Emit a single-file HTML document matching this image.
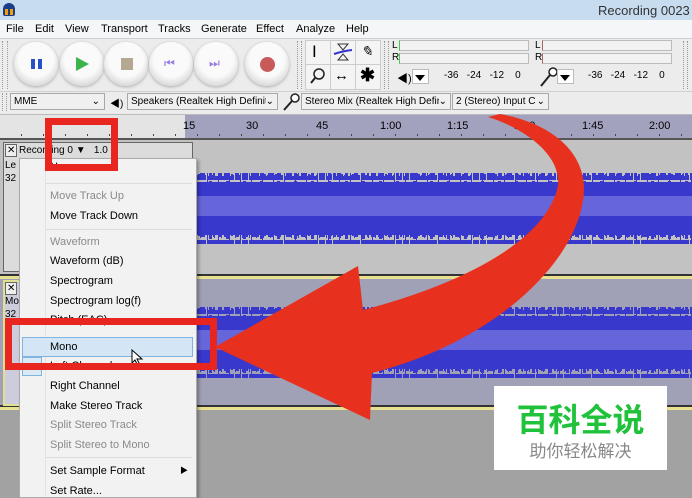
<!DOCTYPE html>
<html><head><meta charset="utf-8"><style>
*{margin:0;padding:0;box-sizing:border-box}
body{width:692px;height:495px;overflow:hidden;position:relative;background:#a2a2a2;font-family:"Liberation Sans","Noto Sans CJK SC",sans-serif;font-size:11px;color:#000}
.a{position:absolute}
.t{position:absolute;white-space:nowrap}
.btn{position:absolute;width:44px;height:44px;border-radius:50%;background:radial-gradient(circle at 50% 40%,#fafafa 50%,#d8d8d8 78%,#bdbdbd);box-shadow:0 1px 3px #aaa}
.dd{position:absolute;height:17px;border:1px solid #a8a8a8;background:#f0f0f0;font-size:10px;padding:2px 3px;white-space:nowrap;overflow:hidden}
.mi{position:absolute;left:50px;font-size:11px;white-space:nowrap}
.g{color:#8a8a8a}
.sep{position:absolute;left:46px;width:146px;height:1px;background:#dcdcdc}
.m{position:absolute;top:23px;white-space:nowrap}
</style></head><body>
<div class="a" style="left:0;top:0;width:692px;height:20px;background:#c8dcf0"></div>
<div class="a" style="left:3px;top:3px;width:12px;height:13px;border-radius:6px 6px 2px 2px;background:#1a3c8a"></div>
<div class="a" style="left:5px;top:9px;width:3px;height:6px;background:#f0a000"></div>
<div class="a" style="left:10px;top:9px;width:3px;height:6px;background:#f0a000"></div>
<div class="t" style="left:598px;top:3px;font-size:13px;color:#333">Recording 0023</div>
<div class="a" style="left:0;top:20px;width:692px;height:18px;background:#f5f6f7"></div>
<div class="m" style="left:6px">File</div><div class="m" style="left:35px">Edit</div><div class="m" style="left:65px">View</div><div class="m" style="left:101px">Transport</div><div class="m" style="left:158px">Tracks</div><div class="m" style="left:201px">Generate</div><div class="m" style="left:256px">Effect</div><div class="m" style="left:296px">Analyze</div><div class="m" style="left:346px">Help</div>
<div class="a" style="left:0;top:38px;width:692px;height:76px;background:#ececec;border-top:1px solid #d0d0d0"></div>
<div class="a" style="left:2px;top:41px;width:6px;height:48px;border-left:1px dotted #999;border-right:1px dotted #999"></div>
<div class="btn" style="left:14px;top:42px"></div><div class="a" style="left:31px;top:59px;width:4px;height:10px;background:#2b4fc8"></div><div class="a" style="left:38px;top:59px;width:4px;height:10px;background:#2b4fc8"></div>
<div class="btn" style="left:60px;top:42px"></div><div class="a" style="left:76px;top:57px;border-left:13px solid #3cb44a;border-top:7px solid transparent;border-bottom:7px solid transparent"></div>
<div class="btn" style="left:104px;top:42px"></div><div class="a" style="left:121px;top:58px;width:12px;height:12px;background:#b4a890"></div>
<div class="btn" style="left:149px;top:42px"></div><div class="t" style="left:164px;top:56px;color:#9a7ce0;font-size:12px">⏮</div>
<div class="btn" style="left:194px;top:42px"></div><div class="t" style="left:209px;top:56px;color:#9a7ce0;font-size:12px">⏭</div>
<div class="btn" style="left:245px;top:42px"></div><div class="a" style="left:260px;top:57px;width:15px;height:15px;border-radius:50%;background:#c85a5a"></div>
<div class="a" style="left:297px;top:41px;width:5px;height:48px;border-left:1px dotted #999;border-right:1px dotted #999"></div>
<div class="a" style="left:305px;top:40px;width:76px;height:50px;border:1px solid #ccc;background:#f4f4f4"></div>
<div class="a" style="left:305px;top:64px;width:76px;height:1px;background:#ccc"></div>
<div class="a" style="left:330px;top:40px;width:1px;height:50px;background:#ccc"></div>
<div class="a" style="left:355px;top:40px;width:1px;height:50px;background:#ccc"></div>
<div class="t" style="left:312px;top:42px;font-size:17px">I</div>
<svg class="a" style="left:333px;top:42px" width="20" height="20"><path d="M5 2h10L10 8z M5 18h10L10 12z" fill="none" stroke="#333"/><path d="M1 12 Q10 9 19 8" stroke="#3333cc" stroke-width="2" fill="none"/></svg>
<div class="t" style="left:361px;top:43px;font-size:14px;font-style:italic">✎</div>
<svg class="a" style="left:309px;top:67px" width="18" height="18"><circle cx="10" cy="7" r="5" fill="none" stroke="#222" stroke-width="1.5"/><path d="M6 11 L2 16" stroke="#222" stroke-width="2"/></svg>
<div class="t" style="left:334px;top:67px;font-size:15px">↔</div>
<div class="t" style="left:360px;top:65px;font-size:18px;font-weight:bold">✱</div>
<div class="a" style="left:384px;top:41px;width:5px;height:48px;border-left:1px dotted #999;border-right:1px dotted #999"></div>
<div class="t" style="left:392px;top:40px;font-size:10px">L</div><div class="t" style="left:392px;top:52px;font-size:10px">R</div>
<div class="a" style="left:399px;top:40px;width:130px;height:11px;border:1px solid #bbb;border-left:1px solid #4c4;background:#f2f2f2"></div>
<div class="a" style="left:399px;top:53px;width:130px;height:11px;border:1px solid #bbb;border-left:1px solid #4c4;background:#f2f2f2"></div>
<div class="t" style="left:535px;top:40px;font-size:10px">L</div><div class="t" style="left:535px;top:52px;font-size:10px">R</div>
<div class="a" style="left:542px;top:40px;width:130px;height:11px;border:1px solid #bbb;border-left:1px solid #a66;background:#f2f2f2"></div>
<div class="a" style="left:542px;top:53px;width:130px;height:11px;border:1px solid #bbb;border-left:1px solid #a66;background:#f2f2f2"></div>
<div class="t" style="left:397px;top:70px;font-size:11px">◀)</div>
<div class="a" style="left:412px;top:69px;width:17px;height:15px;background:#fff;border:1px solid #bbb"></div><div class="a" style="left:415px;top:75px;border-top:6px solid #000;border-left:5px solid transparent;border-right:5px solid transparent"></div>
<div class="t" style="left:444px;top:70px;font-size:10px">-36&nbsp;&nbsp;&nbsp;-24&nbsp;&nbsp;&nbsp;-12&nbsp;&nbsp;&nbsp;&nbsp;0</div>
<svg class="a" style="left:538px;top:66px" width="22" height="22"><circle cx="15" cy="6" r="4" fill="#fff" stroke="#222" stroke-width="1.5"/><path d="M12 9 L3 20" stroke="#222" stroke-width="2"/></svg>
<div class="a" style="left:557px;top:69px;width:17px;height:15px;background:#fff;border:1px solid #bbb"></div><div class="a" style="left:560px;top:75px;border-top:6px solid #000;border-left:5px solid transparent;border-right:5px solid transparent"></div>
<div class="t" style="left:588px;top:70px;font-size:10px">-36&nbsp;&nbsp;&nbsp;-24&nbsp;&nbsp;&nbsp;-12&nbsp;&nbsp;&nbsp;&nbsp;0</div>
<div class="a" style="left:683px;top:41px;width:5px;height:48px;border-left:1px dotted #999;border-right:1px dotted #999"></div>
<div class="a" style="left:0;top:91px;width:692px;height:1px;background:#d0d0d0"></div>
<div class="a" style="left:2px;top:93px;width:5px;height:18px;border-left:1px dotted #999;border-right:1px dotted #999"></div>
<div class="dd" style="left:10px;top:93px;width:95px">MME<span style="position:absolute;right:4px">⌄</span></div>
<div class="t" style="left:110px;top:95px;font-size:10px">◀)</div>
<div class="dd" style="left:127px;top:93px;width:151px">Speakers (Realtek High Definit<span style="position:absolute;right:3px;background:#f0f0f0">⌄</span></div>
<svg class="a" style="left:281px;top:92px" width="20" height="20"><circle cx="14" cy="6" r="4" fill="#fff" stroke="#222" stroke-width="1.5"/><path d="M11 9 L3 18" stroke="#222" stroke-width="2"/></svg>
<div class="dd" style="left:301px;top:93px;width:150px">Stereo Mix (Realtek High Defir<span style="position:absolute;right:3px;background:#f0f0f0">⌄</span></div>
<div class="dd" style="left:452px;top:93px;width:97px">2 (Stereo) Input C<span style="position:absolute;right:3px;background:#f0f0f0">⌄</span></div>
<div class="a" style="left:0;top:114px;width:692px;height:25px;background:#e4e4e4;border-top:1px solid #bbb"></div>
<div class="a" style="left:185px;top:115px;width:507px;height:24px;background:#a2a2be"></div>
<div class="a" style="left:0;top:138px;width:692px;height:2px;background:#555"></div>
<div class="t" style="left:183px;top:120px">15</div><div class="t" style="left:246px;top:120px">30</div>
<div class="t" style="left:316px;top:120px">45</div><div class="t" style="left:380px;top:120px">1:00</div><div class="t" style="left:447px;top:120px">1:15</div><div class="t" style="left:514px;top:120px">1:30</div><div class="t" style="left:582px;top:120px">1:45</div><div class="t" style="left:649px;top:120px">2:00</div>
<div class="a" style="left:0;top:134px;width:692px;height:2px;background:repeating-linear-gradient(90deg,transparent 0 21px,#444 21px 22px)"></div>
<div class="a" style="left:0;top:140px;width:692px;height:136px;background:#c2c2c2;border-bottom:2px solid #333"></div>
<div class="a" style="left:3px;top:142px;width:190px;height:130px;background:#dcdcdc;border:1px solid #666"></div>
<div class="a" style="left:0;top:276px;width:692px;height:3px;background:#e8e090"></div>
<div class="a" style="left:0;top:279px;width:692px;height:128px;background:#a0a0b6;border-bottom:2px solid #333"></div>
<div class="a" style="left:3px;top:280px;width:190px;height:126px;background:#ccccdc;border:2px solid #e0e090"></div>
<div class="a" style="left:0;top:407px;width:692px;height:3px;background:#e8e090"></div>
<div class="t" style="left:5px;top:144px;font-size:10px;border:1px solid #666;padding:0 1px;background:#eee">✕</div>
<div class="t" style="left:19px;top:145px;font-size:10px">Recording 0 ▼&nbsp;&nbsp;&nbsp;1.0</div>
<div class="t" style="left:5px;top:160px;font-size:10px">Le</div><div class="t" style="left:5px;top:173px;font-size:10px">32</div>
<div class="t" style="left:5px;top:282px;font-size:10px;border:1px solid #666;padding:0 1px;background:#eee">✕</div>
<div class="t" style="left:5px;top:296px;font-size:10px">Mo</div><div class="t" style="left:5px;top:309px;font-size:10px">32</div>
<svg class="a" style="left:190px;top:140px" width="502" height="270">
<defs>
<pattern id="p1" width="7" height="10" patternUnits="userSpaceOnUse"><rect x="0" y="5" width="2" height="5" fill="#3838cc"/><rect x="3" y="2" width="1" height="8" fill="#3838cc"/><rect x="4" y="6" width="3" height="4" fill="#3838cc"/></pattern>
<pattern id="p2" width="11" height="10" patternUnits="userSpaceOnUse"><rect x="1" y="3" width="2" height="7" fill="#3838cc"/><rect x="6" y="0" width="1" height="10" fill="#3838cc"/><rect x="8" y="4" width="2" height="6" fill="#3838cc"/></pattern>
<pattern id="p3" width="17" height="10" patternUnits="userSpaceOnUse"><rect x="2" y="1" width="3" height="9" fill="#3838cc"/><rect x="11" y="3" width="4" height="7" fill="#3838cc"/></pattern>
<pattern id="q1" width="7" height="10" patternUnits="userSpaceOnUse"><rect x="0" y="0" width="2" height="5" fill="#3838cc"/><rect x="3" y="0" width="1" height="8" fill="#3838cc"/><rect x="4" y="0" width="3" height="4" fill="#3838cc"/></pattern>
<pattern id="q2" width="11" height="10" patternUnits="userSpaceOnUse"><rect x="1" y="0" width="2" height="7" fill="#3838cc"/><rect x="6" y="0" width="1" height="10" fill="#3838cc"/><rect x="8" y="0" width="2" height="6" fill="#3838cc"/></pattern>
<pattern id="q3" width="17" height="10" patternUnits="userSpaceOnUse"><rect x="2" y="0" width="3" height="9" fill="#3838cc"/><rect x="11" y="0" width="4" height="7" fill="#3838cc"/></pattern>
</defs>
<g id="w1">
<rect x="6" y="42" width="496" height="53" fill="#3838cc"/>
<rect x="6" y="33" width="496" height="10" fill="url(#p1)"/><rect x="6" y="33" width="496" height="10" fill="url(#p2)"/><rect x="6" y="33" width="496" height="10" fill="url(#p3)"/>
<rect x="6" y="94" width="496" height="10" fill="url(#q1)"/><rect x="6" y="94" width="496" height="10" fill="url(#q2)"/><rect x="6" y="94" width="496" height="10" fill="url(#q3)"/>
<rect x="6" y="56" width="496" height="20" fill="#6666da"/>
</g>
<use href="#w1" y="134"/>
</svg>
<div class="a" style="left:19px;top:158px;width:178px;height:340px;background:#f2f2f2;border:1px solid #aaa;box-shadow:2px 2px 3px rgba(0,0,0,.3)"></div>
<div class="a" style="left:45px;top:159px;width:1px;height:336px;background:#e2e2e2"></div>
<div class="mi" style="top:161px">Name...</div>
<div class="sep" style="top:183px"></div>
<div class="mi g" style="top:190px">Move Track Up</div>
<div class="mi" style="top:210px">Move Track Down</div>
<div class="sep" style="top:229px"></div>
<div class="mi g" style="top:236px">Waveform</div>
<div class="mi" style="top:255px">Waveform (dB)</div>
<div class="mi" style="top:275px">Spectrogram</div>
<div class="mi" style="top:295px">Spectrogram log(f)</div>
<div class="mi" style="top:314px">Pitch (EAC)</div>
<div class="a" style="left:22px;top:337px;width:171px;height:20px;background:#d4e6f6;border:1px solid #7fb4e0"></div>
<div class="mi" style="top:341px">Mono</div>
<div class="mi" style="top:360px">Left Channel</div>
<div class="a" style="left:22px;top:357px;width:20px;height:19px;border:1px solid #7fb4e0;background:#dbe9f6"></div>
<div class="mi" style="top:380px">Right Channel</div>
<div class="mi" style="top:400px">Make Stereo Track</div>
<div class="mi g" style="top:419px">Split Stereo Track</div>
<div class="mi g" style="top:439px">Split Stereo to Mono</div>
<div class="sep" style="top:457px"></div>
<div class="mi" style="top:465px">Set Sample Format</div><div class="t" style="left:180px;top:465px;font-size:8px">▶</div>
<div class="mi" style="top:485px">Set Rate...</div>
<svg class="a" style="left:131px;top:349px" width="14" height="18"><path d="M1 1 L1 14 L4 11 L7 17 L9 16 L6 10 L11 10 Z" fill="#fff" stroke="#000"/></svg>
<div class="a" style="left:45px;top:118px;width:73px;height:53px;border:7px solid #e8251f"></div>
<div class="a" style="left:5px;top:318px;width:212px;height:52px;border:7px solid #e8251f"></div>
<svg class="a" style="left:0;top:0" width="692" height="495"><path d="M215,347 L358,266 L363,310 C440,290 540,250 557,190 C565,160 530,130 488,117 L500,114 C560,125 590,160 583,200 C575,260 500,340 372,373 L370,420 Z" fill="#e8301f"/></svg>
<div class="a" style="left:494px;top:386px;width:173px;height:84px;background:#fff"></div>
<div class="t" style="left:494px;top:400px;width:173px;text-align:center;font-size:32px;font-weight:bold;color:#1fc23a;line-height:36px;font-family:'Noto Sans CJK SC',sans-serif">百科全说</div>
<div class="t" style="left:494px;top:439px;width:173px;text-align:center;font-size:17px;color:#888;line-height:22px;font-family:'Noto Sans CJK SC',sans-serif">助你轻松解决</div>
</body></html>
